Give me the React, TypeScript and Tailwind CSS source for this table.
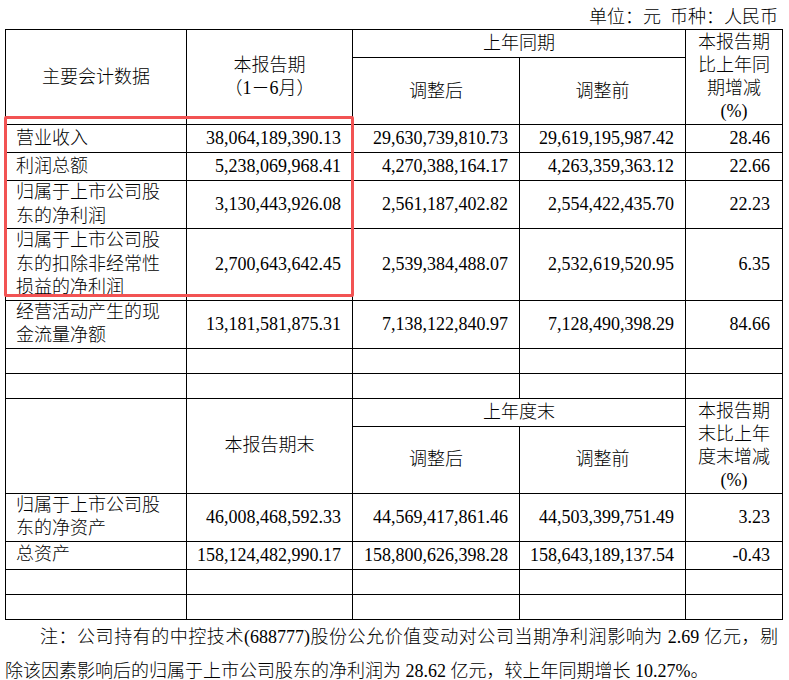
import React from "react";

type Row = {
  label: React.ReactNode;
  values: string[];
  h: string;
};

const topRows: Row[] = [
  { label: "营业收入", values: ["38,064,189,390.13", "29,630,739,810.73", "29,619,195,987.42", "28.46"], h: "h-[25px]" },
  { label: "利润总额", values: ["5,238,069,968.41", "4,270,388,164.17", "4,263,359,363.12", "22.66"], h: "h-[25px]" },
  {
    label: (
      <>
        归属于上市公司股
        <br />
        东的净利润
      </>
    ),
    values: ["3,130,443,926.08", "2,561,187,402.82", "2,554,422,435.70", "22.23"],
    h: "h-[48px]",
  },
  {
    label: (
      <>
        归属于上市公司股
        <br />
        东的扣除非经常性
        <br />
        损益的净利润
      </>
    ),
    values: ["2,700,643,642.45", "2,539,384,488.07", "2,532,619,520.95", "6.35"],
    h: "h-[71px]",
  },
  {
    label: (
      <>
        经营活动产生的现
        <br />
        金流量净额
      </>
    ),
    values: ["13,181,581,875.31", "7,138,122,840.97", "7,128,490,398.29", "84.66"],
    h: "h-[48px]",
  },
];

const bottomRows: Row[] = [
  {
    label: (
      <>
        归属于上市公司股
        <br />
        东的净资产
      </>
    ),
    values: ["46,008,468,592.33", "44,569,417,861.46", "44,503,399,751.49", "3.23"],
    h: "h-[47px]",
  },
  { label: "总资产", values: ["158,124,482,990.17", "158,800,626,398.28", "158,643,189,137.54", "-0.43"], h: "h-[25px]" },
];

const cell = "border border-black p-0 align-middle";

function DataRow({ row }: { row: Row }) {
  return (
    <tr className={row.h}>
      <td className={`${cell} pl-[10px] text-left leading-[23.5px]`}>{row.label}</td>
      {row.values.map((v, i) => (
        <td key={i} className={`${cell} ${i === 3 ? "pr-[12px]" : "pr-[11px]"} text-right`}>
          {v}
        </td>
      ))}
    </tr>
  );
}

function EmptyRow() {
  return (
    <tr className="h-[25px]">
      <td className={cell}></td>
      <td className={cell}></td>
      <td className={cell}></td>
      <td className={cell}></td>
      <td className={cell}></td>
    </tr>
  );
}

export default function App() {
  return (
    <div className="relative w-[789px] h-[680px] bg-white text-black text-[18px] font-light font-['Liberation_Serif','Noto_Sans_CJK_SC',serif]">
      <div className="h-[29px] pt-[5px] pr-[11px] text-right leading-[24px]">
        单位：元&nbsp;&nbsp;币种：人民币
      </div>

      <table className="ml-[5px] w-[777px] table-fixed border-collapse">
        <colgroup>
          <col className="w-[181px]" />
          <col className="w-[166px]" />
          <col className="w-[167px]" />
          <col className="w-[166px]" />
          <col className="w-[97px]" />
        </colgroup>
        <tbody>
          <tr className="h-[24px]">
            <td rowSpan={2} className={`${cell} text-center`}>主要会计数据</td>
            <td rowSpan={2} className={`${cell} text-center leading-[23px]`}>
              本报告期
              <br />
              （1－6月）
            </td>
            <td colSpan={2} className={`${cell} text-center`}>上年同期</td>
            <td rowSpan={2} className={`${cell} text-center leading-[23px]`}>
              本报告期
              <br />
              比上年同
              <br />
              期增减
              <br />
              (%)
            </td>
          </tr>
          <tr className="h-[67px]">
            <td className={`${cell} text-center`}>调整后</td>
            <td className={`${cell} text-center`}>调整前</td>
          </tr>
          {topRows.map((r, i) => (
            <DataRow key={i} row={r} />
          ))}
          <EmptyRow />
          <EmptyRow />

          <tr className="h-[25px]">
            <td rowSpan={2} className={cell}></td>
            <td rowSpan={2} className={`${cell} text-center`}>本报告期末</td>
            <td colSpan={2} className={`${cell} text-center`}>上年度末</td>
            <td rowSpan={2} className={`${cell} text-center leading-[23px]`}>
              本报告期
              <br />
              末比上年
              <br />
              度末增减
              <br />
              (%)
            </td>
          </tr>
          <tr className="h-[67px]">
            <td className={`${cell} text-center`}>调整后</td>
            <td className={`${cell} text-center`}>调整前</td>
          </tr>
          {bottomRows.map((r, i) => (
            <DataRow key={i} row={r} />
          ))}
          <EmptyRow />
          <EmptyRow />
        </tbody>
      </table>

      <div className="leading-[34px]">
        <div className="pl-[40px] pr-[11px] text-justify [text-align-last:justify]">
          注：公司持有的中控技术(688777)股份公允价值变动对公司当期净利润影响为 2.69 亿元，剔
        </div>
        <div className="pl-[5px]">
          除该因素影响后的归属于上市公司股东的净利润为 28.62 亿元，较上年同期增长 10.27%。
        </div>
      </div>

      {/* highlight box drawn over the first rows */}
      <div className="absolute left-[4px] top-[116px] w-[350px] h-[181px] border-[3px] border-[#f25353] rounded-[2px] pointer-events-none" />
    </div>
  );
}
